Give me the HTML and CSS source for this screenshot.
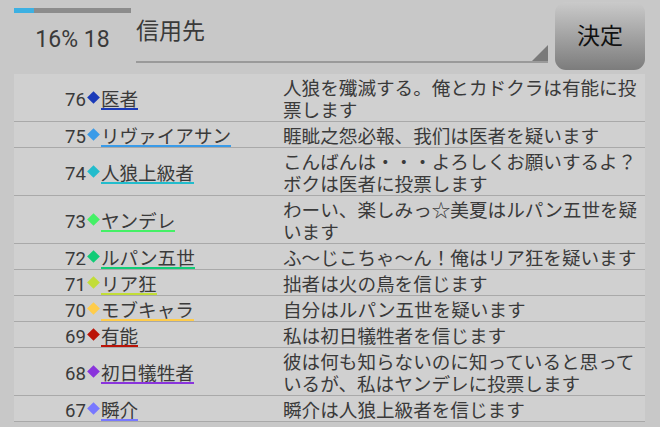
FILE: index.html
```html
<!DOCTYPE html>
<html lang="ja">
<head>
    <meta charset="UTF-8">
    <meta name="viewport" content="width=device-width, initial-scale=1.0">
    <title>投票</title>
    <link rel="stylesheet" href="styles.css">
</head>
<body>
<div class="top">
    <div class="status">
        <div class="progress"><div class="progress__fill" style="width: 17%"></div></div>
        <div class="status__text">16% 18</div>
    </div>
    <div class="select">
        <span class="select__value">信用先</span>
        <span class="select__arrow"></span>
    </div>
    <button class="button" type="button">決定</button>
</div>

<div class="list">
    <div class="row">
        <div class="row__name">76<i class="mark" style="background: #1a3ab8"></i><span class="name" style="border-color: #1a3ab8">医者</span></div>
        <div class="row__text">人狼を殲滅する。俺とカドクラは有能に投票します</div>
    </div>
    <div class="row">
        <div class="row__name">75<i class="mark" style="background: #3a9be8"></i><span class="name" style="border-color: #3a9be8">リヴァイアサン</span></div>
        <div class="row__text">睚眦之怨必報、我们は医者を疑います</div>
    </div>
    <div class="row">
        <div class="row__name">74<i class="mark" style="background: #22bccc"></i><span class="name" style="border-color: #22bccc">人狼上級者</span></div>
        <div class="row__text">こんばんは・・・よろしくお願いするよ？ボクは医者に投票します</div>
    </div>
    <div class="row">
        <div class="row__name">73<i class="mark" style="background: #44f066"></i><span class="name" style="border-color: #44f066">ヤンデレ</span></div>
        <div class="row__text">わーい、楽しみっ☆美夏はルパン五世を疑います</div>
    </div>
    <div class="row">
        <div class="row__name">72<i class="mark" style="background: #11cc77"></i><span class="name" style="border-color: #11cc77">ルパン五世</span></div>
        <div class="row__text">ふ～じこちゃ～ん！俺はリア狂を疑います</div>
    </div>
    <div class="row">
        <div class="row__name">71<i class="mark" style="background: #c2dd38"></i><span class="name" style="border-color: #c2dd38">リア狂</span></div>
        <div class="row__text">拙者は火の鳥を信じます</div>
    </div>
    <div class="row">
        <div class="row__name">70<i class="mark" style="background: #ffcc4a"></i><span class="name" style="border-color: #ffcc4a">モブキャラ</span></div>
        <div class="row__text">自分はルパン五世を疑います</div>
    </div>
    <div class="row">
        <div class="row__name">69<i class="mark" style="background: #bb1408"></i><span class="name" style="border-color: #bb1408">有能</span></div>
        <div class="row__text">私は初日犠牲者を信じます</div>
    </div>
    <div class="row">
        <div class="row__name">68<i class="mark" style="background: #8a34dc"></i><span class="name" style="border-color: #8a34dc">初日犠牲者</span></div>
        <div class="row__text">彼は何も知らないのに知っていると思っているが、私はヤンデレに投票します</div>
    </div>
    <div class="row">
        <div class="row__name">67<i class="mark" style="background: #7878ff"></i><span class="name" style="border-color: #7878ff">瞬介</span></div>
        <div class="row__text">瞬介は人狼上級者を信じます</div>
    </div>
</div>
</body>
</html>
```

FILE: styles.css
```css
body {
    margin: 0;
    background: #c8c8c8;
    color: #3a3a3a;
    font-family: Roboto, "Noto Sans CJK JP", sans-serif;
    overflow: hidden;
}

.top {
    display: flex;
    height: 74px;
    padding-left: 14px;
}
.status {
    width: 117px;
    padding-top: 8px;
}
.progress {
    height: 5px;
    background: #8c8c8c;
}
.progress__fill {
    height: 100%;
    background: #3cb0e2;
}
.status__text {
    margin-top: 12px;
    text-align: center;
    font-size: 23px;
    line-height: 30px;
}

.select {
    position: relative;
    width: 412px;
    height: 61px;
    margin-left: 5px;
    border-bottom: 2px solid #9a9a9a;
}
.select__value {
    display: block;
    padding-top: 17px;
    font-size: 23px;
    line-height: 30px;
}
.select__arrow {
    position: absolute;
    right: 0;
    bottom: 0;
    width: 0;
    height: 0;
    border-left: 16px solid transparent;
    border-bottom: 16px solid #7a7a7a;
}

.button {
    width: 90px;
    height: 68px;
    margin: 2px 0 0 7px;
    border: none;
    border-radius: 11px;
    background: linear-gradient(#cacaca, #7c7c7c);
    color: #111;
    font-family: "Noto Sans CJK JP", sans-serif;
    font-size: 23px;
    padding: 0 0 4px;
}

.list {
    width: 631px;
    margin-left: 14px;
    background: #d0d0d0;
}
.row {
    display: grid;
    grid-template-columns: 269px 1fr;
    align-items: center;
    padding: 2px 0 1px;
    border-bottom: 1px solid #a9a9a9;
    font-size: 18.6px;
    line-height: 22px;
}
.row__name {
    height: 22px;
    padding-left: 51px;
    white-space: nowrap;
}
.row__text {
    padding-right: 6px;
    font-family: "Noto Sans CJK JP", sans-serif;
}
.mark {
    display: inline-block;
    width: 9px;
    height: 9px;
    margin: 0 3px;
    transform: rotate(45deg);
    vertical-align: 4px;
}
.name {
    display: inline-block;
    font-family: "Noto Sans CJK JP", sans-serif;
    border-bottom: 2px solid;
    line-height: 21px;
}
```
